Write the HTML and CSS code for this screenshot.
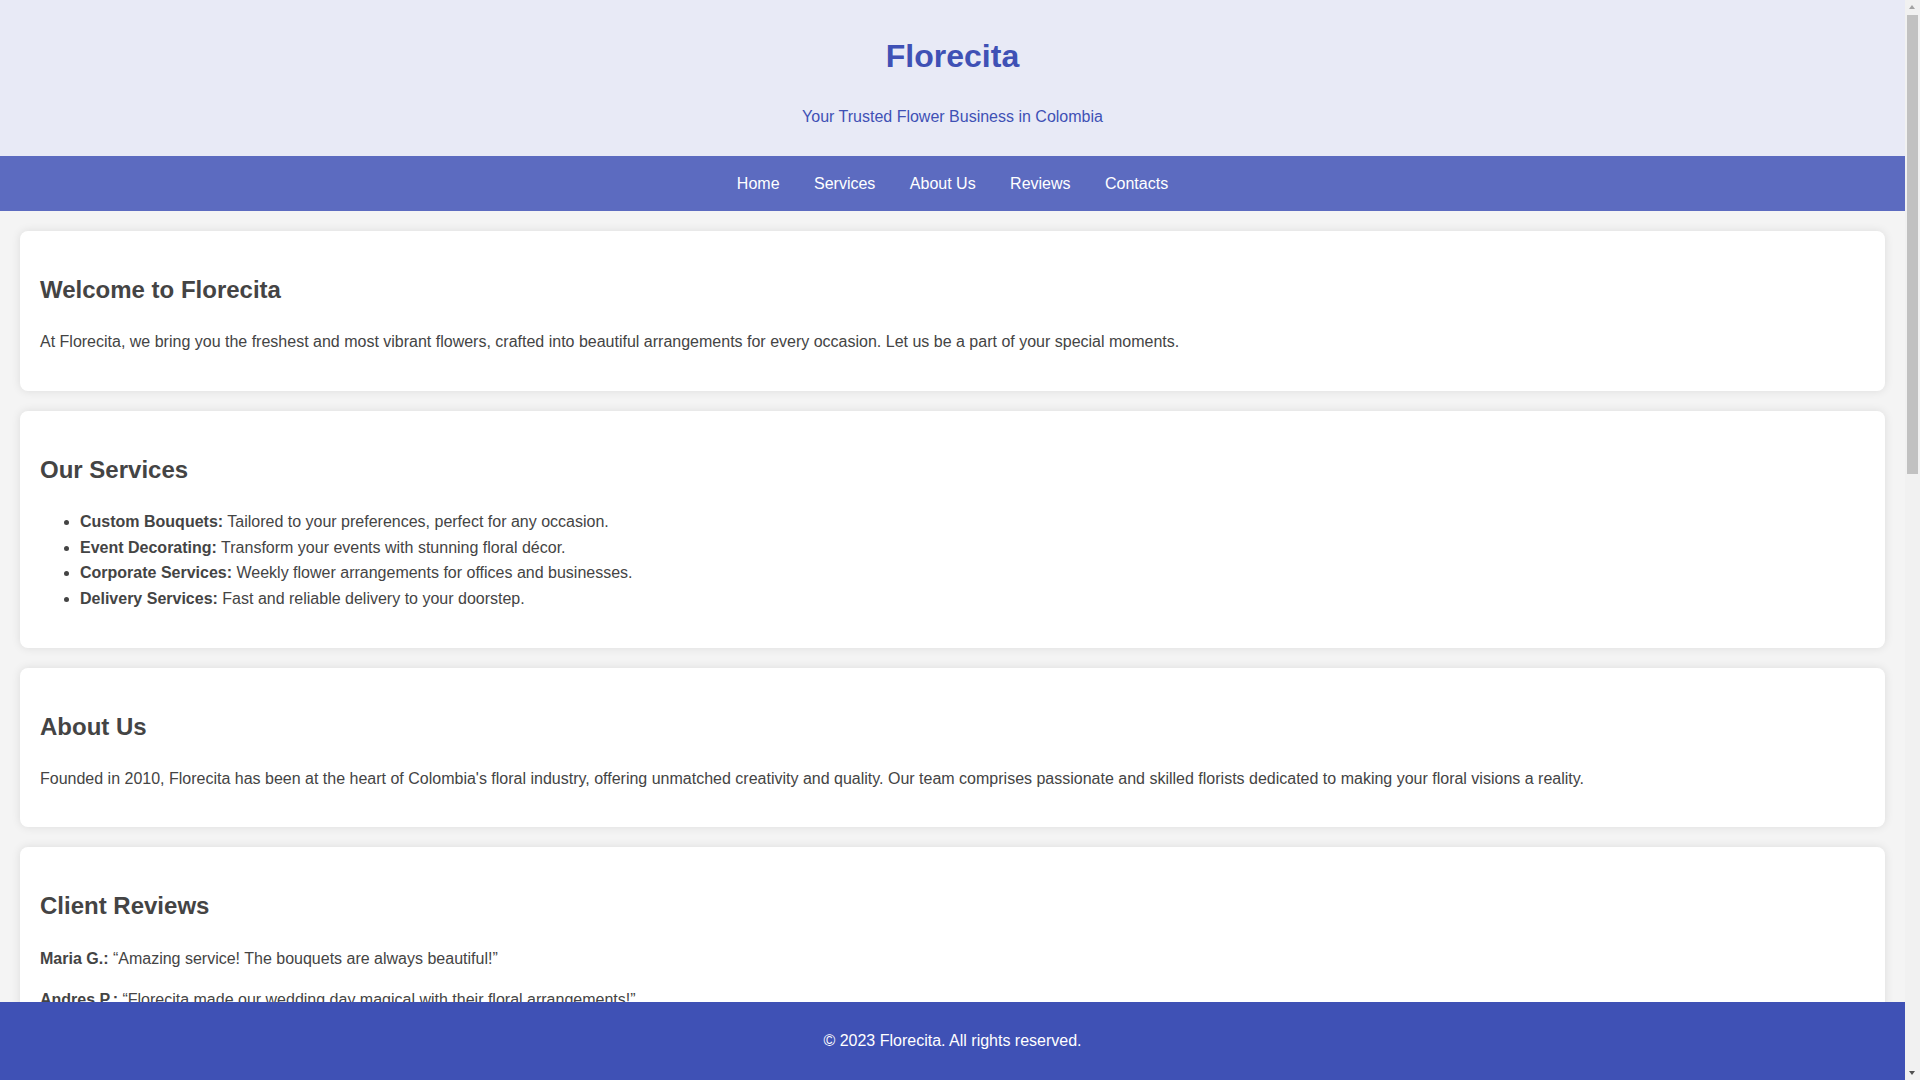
FILE: index.html
```html
<!DOCTYPE html>
<html lang="en">
<head>
    <meta charset="UTF-8">
    <meta name="viewport" content="width=device-width, initial-scale=1.0">
    <title>Florecita - Flower Business in Colombia</title>
    <link rel="stylesheet" href="styles.css">
</head>
<body>
    <header>
        <h1>Florecita</h1>
        <p>Your Trusted Flower Business in Colombia</p>
    </header>

    <nav>
        <a href="#home">Home</a>
        <a href="#services">Services</a>
        <a href="#about">About Us</a>
        <a href="#reviews">Reviews</a>
        <a href="#contacts">Contacts</a>
    </nav>

    <main>
        <section id="home">
            <h2>Welcome to Florecita</h2>
            <p>At Florecita, we bring you the freshest and most vibrant flowers, crafted into beautiful arrangements for every occasion. Let us be a part of your special moments.</p>
        </section>

        <section id="services">
            <h2>Our Services</h2>
            <ul>
                <li><strong>Custom Bouquets:</strong> Tailored to your preferences, perfect for any occasion.</li>
                <li><strong>Event Decorating:</strong> Transform your events with stunning floral décor.</li>
                <li><strong>Corporate Services:</strong> Weekly flower arrangements for offices and businesses.</li>
                <li><strong>Delivery Services:</strong> Fast and reliable delivery to your doorstep.</li>
            </ul>
        </section>

        <section id="about">
            <h2>About Us</h2>
            <p>Founded in 2010, Florecita has been at the heart of Colombia's floral industry, offering unmatched creativity and quality. Our team comprises passionate and skilled florists dedicated to making your floral visions a reality.</p>
        </section>

        <section id="reviews">
            <h2>Client Reviews</h2>
            <p><strong>Maria G.:</strong> “Amazing service! The bouquets are always beautiful!”</p>
            <p><strong>Andres P.:</strong> “Florecita made our wedding day magical with their floral arrangements!”</p>
            <p><strong>Camila R.:</strong> “Reliable, creative and always on time. Highly recommended!”</p>
        </section>

        <section id="contacts">
            <h2>Contact Us</h2>
            <p>We'd love to hear from you! Reach out to place an order or to ask about our services.</p>
            <p><strong>Phone:</strong> +57 300 123 4567</p>
            <p><strong>Email:</strong> info@florecita.com</p>
            <p><strong>Address:</strong> Calle 85 #12-34, Bogotá, Colombia</p>

            <h3>Business Hours</h3>
            <ul>
                <li>Monday - Friday: 8:00 AM - 6:00 PM</li>
                <li>Saturday: 9:00 AM - 4:00 PM</li>
                <li>Sunday: Closed</li>
            </ul>

            <h3>Send Us a Message</h3>
            <form class="contact-form">
                <label for="name">Name</label>
                <input type="text" id="name" placeholder="Your name">
                <label for="email">Email</label>
                <input type="email" id="email" placeholder="Your email">
                <label for="phone">Phone</label>
                <input type="text" id="phone" placeholder="Your phone number">
                <label for="message">Message</label>
                <textarea id="message" placeholder="How can we help you?"></textarea>
                <button type="button">Send Message</button>
            </form>
        </section>
    </main>

    <footer>
        <p>&copy; 2023 Florecita. All rights reserved.</p>
    </footer>

    <!-- page scrollbar as it shows in the browser window -->
    <div class="scrollbar" aria-hidden="true">
        <span class="arrow up"></span>
        <span class="thumb"></span>
        <span class="arrow down"></span>
    </div>
</body>
</html>
```

FILE: styles.css
```css
body {
    font-family: Arial, "Liberation Sans", sans-serif;
    margin: 0 15px 0 0;
    padding: 0;
    line-height: 1.6;
    background: #f4f4f4;
    color: #444;
}
header {
    background: #e8eaf6;
    color: #3f51b5;
    text-align: center;
    padding: 10px 0;
}
nav {
    background: #5c6bc0;
    text-align: center;
    padding: 15px 0;
}
nav a {
    color: white;
    text-decoration: none;
    margin: 0 15px;
}
main {
    padding: 20px 20px 100px;
}
section {
    background: white;
    padding: 20px;
    margin-bottom: 20px;
    border-radius: 8px;
    box-shadow: 0 0 10px rgba(0, 0, 0, 0.1);
}
.contact-form label {
    display: block;
    margin-top: 10px;
}
.contact-form input,
.contact-form textarea {
    display: block;
    width: 100%;
    box-sizing: border-box;
    padding: 10px;
    border: 1px solid #ccc;
    border-radius: 4px;
    font-family: inherit;
    font-size: 16px;
}
.contact-form textarea {
    height: 200px;
}
.contact-form button {
    margin-top: 15px;
    padding: 10px 20px;
    background: #3f51b5;
    color: white;
    border: none;
    border-radius: 4px;
    font-size: 16px;
    cursor: pointer;
}
footer {
    background: #3f51b5;
    color: white;
    text-align: center;
    padding: 10px 0;
    position: fixed;
    bottom: 0;
    left: 0;
    right: 15px;
}

.scrollbar {
    position: fixed;
    top: 0;
    right: 0;
    width: 15px;
    height: 100vh;
    background: #f1f1f1;
}
.scrollbar .thumb {
    position: absolute;
    top: 15px;
    left: 2px;
    width: 11px;
    height: 459px;
    background: #c1c1c1;
}
.scrollbar .arrow {
    position: absolute;
    left: 4px;
    width: 0;
    height: 0;
    border-left: 3.5px solid transparent;
    border-right: 3.5px solid transparent;
}
.scrollbar .up {
    top: 5px;
    border-bottom: 4px solid #a3a3a3;
}
.scrollbar .down {
    bottom: 5px;
    border-top: 4px solid #505050;
}
```
